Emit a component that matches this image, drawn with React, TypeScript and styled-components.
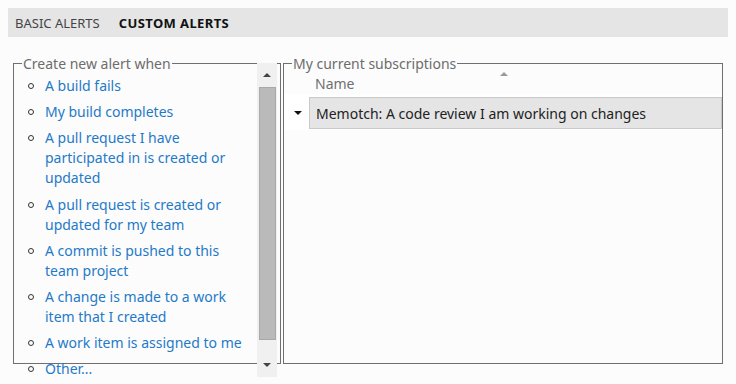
import React from "react";
import styled, { createGlobalStyle } from "styled-components";

const Global = createGlobalStyle`
  html, body { margin: 0; padding: 0; }
  body {
    margin: 8px;
    background: #fcfcfc;
    font-family: "Noto Sans", "Open Sans", sans-serif;
    font-size: 14px;
    color: #222;
  }
`;

const Page = styled.div`
  padding-bottom: 24px;
`;

const TabBar = styled.div`
  display: flex;
  align-items: center;
  gap: 19px;
  height: 29px;
  padding-left: 7px;
  background: #e5e5e5;
  font-size: 13px;
`;

const Tab = styled.span<{ $active?: boolean }>`
  color: ${(p) => (p.$active ? "#111" : "#444")};
  font-weight: ${(p) => (p.$active ? 700 : 400)};
  letter-spacing: ${(p) => (p.$active ? "0.4px" : "0")};
`;

const Panels = styled.div`
  display: flex;
  gap: 2px;
  padding: 0 5px;
  margin-top: 26px;
`;

const GroupBox = styled.section<{ $w?: number }>`
  position: relative;
  box-sizing: border-box;
  height: 301px;
  border: 1px solid #6f6f6f;
  min-width: 0;
  ${(p) => (p.$w ? `width: ${p.$w}px; flex: none;` : "flex: 1;")}
`;

const LeftBox = styled(GroupBox)`
  padding: 9px 3px 0 8px;
`;

const RightBox = styled(GroupBox)`
  padding: 9px 0 0 0;
`;

const Legend = styled.span<{ $inset: number }>`
  position: absolute;
  top: -10px;
  left: ${(p) => p.$inset}px;
  padding: 0 1px;
  line-height: 19px;
  background: #fcfcfc;
  color: #6d6d6d;
  font-size: 14px;
  white-space: nowrap;
`;

const LeftInner = styled.div`
  display: flex;
  align-items: flex-start;
`;

const AlertList = styled.ul`
  flex: 1;
  list-style: none;
  margin: 0;
  padding: 3px 6px 0 0;
`;

const AlertItem = styled.li`
  position: relative;
  padding-left: 23px;
  margin-bottom: 6.2px;
  line-height: 20px;
  color: #1f7ac8;
  cursor: pointer;
  &::before {
    content: "";
    position: absolute;
    left: 6px;
    top: 7px;
    width: 4px;
    height: 4px;
    border: 1px solid #333;
    border-radius: 50%;
  }
`;

const ScrollBar = styled.div`
  flex: none;
  display: flex;
  flex-direction: column;
  align-items: center;
  width: 20px;
  height: 314px;
  margin-top: -10px;
  background: #f0f0f0;
`;

const ArrowBtn = styled.div`
  flex: none;
  height: 24px;
  width: 20px;
  display: flex;
  align-items: center;
  justify-content: center;
`;

const Tri = styled.div<{ $dir: "up" | "down"; $color?: string; $size?: number }>`
  width: 0;
  height: 0;
  border-left: ${(p) => p.$size ?? 4}px solid transparent;
  border-right: ${(p) => p.$size ?? 4}px solid transparent;
  ${(p) =>
    p.$dir === "up"
      ? `border-bottom: ${p.$size ?? 4}px solid ${p.$color ?? "#444"};`
      : `border-top: ${p.$size ?? 4}px solid ${p.$color ?? "#444"};`}
`;

const Thumb = styled.div`
  box-sizing: border-box;
  width: 17px;
  margin-left: 1px;
  height: 253px;
  background: #bababa;
  border: 1px solid #a9a9a9;
`;

const Spacer = styled.div`
  flex: 1;
`;

const HeaderRow = styled.div`
  display: flex;
  padding-top: 1px;
`;

const ExpandCol = styled.div`
  flex: none;
  width: 25px;
`;

const HeaderCell = styled.div`
  position: relative;
  flex: none;
  width: 384px;
  padding-left: 6px;
  line-height: 20px;
  color: #707070;
`;

const SortMark = styled.div`
  position: absolute;
  top: -2px;
  left: 50%;
  transform: translateX(-50%);
`;

const SubRow = styled.div`
  display: flex;
  align-items: center;
  padding: 3px 0 1px;
  background: #fff;
`;

const Expander = styled.div`
  flex: none;
  width: 25px;
  padding-left: 10px;
  box-sizing: border-box;
`;

const SubCell = styled.div`
  flex: 1;
  box-sizing: border-box;
  height: 32px;
  display: flex;
  align-items: center;
  padding-left: 6px;
  background: #e5e5e5;
  border: 1px solid #c9c9c9;
  color: #222;
`;

const alerts = [
  "A build fails",
  "My build completes",
  "A pull request I have participated in is created or updated",
  "A pull request is created or updated for my team",
  "A commit is pushed to this team project",
  "A change is made to a work item that I created",
  "A work item is assigned to me",
  "Other...",
];

export default function App() {
  return (
    <Page>
      <Global />
      <TabBar>
        <Tab>BASIC ALERTS</Tab>
        <Tab $active>CUSTOM ALERTS</Tab>
      </TabBar>
      <Panels>
        <LeftBox $w={268}>
          <Legend $inset={8}>Create new alert when</Legend>
          <LeftInner>
            <AlertList>
              {alerts.map((a) => (
                <AlertItem key={a}>{a}</AlertItem>
              ))}
            </AlertList>
            <ScrollBar>
              <ArrowBtn>
                <Tri $dir="up" $size={4} />
              </ArrowBtn>
              <Thumb />
              <Spacer />
              <ArrowBtn>
                <Tri $dir="down" $size={4} />
              </ArrowBtn>
            </ScrollBar>
          </LeftInner>
        </LeftBox>
        <RightBox>
          <Legend $inset={8}>My current subscriptions</Legend>
          <HeaderRow>
            <ExpandCol />
            <HeaderCell>
              <SortMark>
                <Tri $dir="up" $color="#999" $size={4} />
              </SortMark>
              Name
            </HeaderCell>
          </HeaderRow>
          <SubRow>
            <Expander>
              <Tri $dir="down" $color="#111" $size={4} />
            </Expander>
            <SubCell>Memotch: A code review I am working on changes</SubCell>
          </SubRow>
        </RightBox>
      </Panels>
    </Page>
  );
}
